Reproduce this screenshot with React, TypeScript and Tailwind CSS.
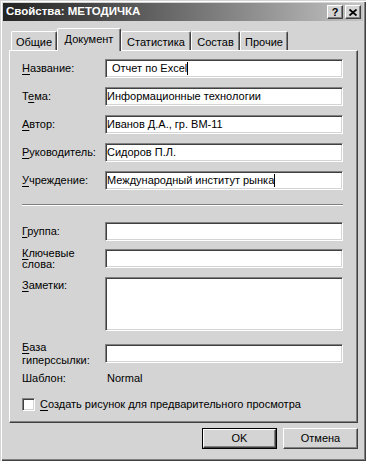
const sunken =
  "border border-t-[#808080] border-l-[#808080] border-b-white border-r-white shadow-[inset_1px_1px_0_#404040,inset_-1px_-1px_0_#d4d4d4] bg-white";
const raised =
  "border border-t-white border-l-white border-b-[#404040] border-r-[#404040] shadow-[inset_-1px_-1px_0_#808080] bg-[#d4d4d4]";

const Acc = ({ text, k }: { text: string; k: number }) => (
  <>
    {text.slice(0, k)}
    <span className="underline underline-offset-[2px]">{text[k]}</span>
    {text.slice(k + 1)}
  </>
);

const Field = ({
  label,
  k,
  value,
  className = "",
  cursor = false,
  lead = false,
}: {
  label: string;
  k: number;
  value?: string;
  className?: string;
  cursor?: boolean;
  lead?: boolean;
}) => (
  <div className={"flex items-center h-[19px] " + className}>
    <div className="w-[83px] leading-[13px]">
      <Acc text={label} k={k} />
    </div>
    <div className={sunken + " flex-1 h-[19px] flex items-center leading-[13px] " + (lead ? "pl-[6px]" : "pl-[1px]")}>
      {value}
      {cursor && <span className="inline-block w-px h-[13px] bg-black" />}
    </div>
  </div>
);

const tabs = [
  { name: "Общие", w: "w-[46px]" },
  { name: "Документ", w: "w-[64px]", active: true },
  { name: "Статистика", w: "w-[70px]" },
  { name: "Состав", w: "w-[49px]" },
  { name: "Прочие", w: "w-[48px]" },
];

export default function App() {
  return (
    <div className="w-[366px] h-[461px] bg-[#d4d4d4] p-[3px] flex flex-col text-[11px] text-black font-['Liberation_Sans',Arial,sans-serif] shadow-[inset_1px_1px_0_#d4d4d4,inset_2px_2px_0_#ffffff,inset_-1px_-1px_0_#404040,inset_-2px_-2px_0_#808080]">
      {/* title bar */}
      <div className="h-[18px] flex items-center bg-linear-to-r from-[#242424] to-[#c4c4c4] pl-[3px] pr-[2px]">
        <span className="font-bold text-white text-[11.5px] leading-none">Свойства: МЕТОДИЧКА</span>
        <div className="ml-auto flex gap-[2px]">
          <div className={raised + " w-[16px] h-[14px] flex items-center justify-center font-bold text-[11px] leading-none"}>
            ?
          </div>
          <div className={raised + " w-[16px] h-[14px] flex items-center justify-center"}>
            <svg width="8" height="7" viewBox="0 0 8 7">
              <path d="M0.5 0.5L7.5 6.5M7.5 0.5L0.5 6.5" stroke="black" strokeWidth="1.8" />
            </svg>
          </div>
        </div>
      </div>

      {/* tabs + panel */}
      <div className="ml-[6px] mr-[5px] mt-[7px] flex flex-col">
        <div className="flex items-end h-[22px] pl-[2px]">
          {tabs.map((t) =>
            t.active ? (
              <div
                key={t.name}
                className={
                  t.w +
                  " relative z-10 -mb-px h-[23px] bg-[#d4d4d4] flex items-center justify-center pb-[2px] rounded-t-[2px] border-t border-l border-white border-r border-r-[#404040] shadow-[inset_-1px_0_0_#808080]"
                }
              >
                {t.name}
              </div>
            ) : (
              <div
                key={t.name}
                className={
                  t.w +
                  " h-[19px] flex items-center justify-center pt-[2px] rounded-t-[2px] border-t border-l border-white border-r border-r-[#404040] shadow-[inset_-1px_0_0_#808080]"
                }
              >
                {t.name}
              </div>
            )
          )}
        </div>

        <div className="h-[373px] flex flex-col pl-[12px] pr-[14px] pt-[8px] border-t border-l border-white border-r border-b border-r-[#404040] border-b-[#404040] shadow-[inset_-1px_-1px_0_#808080]">
          <Field label="Название:" k={0} value="Отчет по Excel" lead cursor />
          <Field label="Тема:" k={1} value="Информационные технологии" className="mt-[9px]" />
          <Field label="Автор:" k={0} value="Иванов Д.А., гр. ВМ-11" className="mt-[9px]" />
          <Field label="Руководитель:" k={0} value="Сидоров П.Л." className="mt-[9px]" />
          <Field label="Учреждение:" k={0} value="Международный институт рынка" cursor className="mt-[9px]" />

          <div className="mt-[14px] border-t border-t-[#808080] border-b border-b-white" />

          <Field label="Группа:" k={0} className="mt-[16px]" />
          <div className="flex items-center h-[19px] mt-[8px]">
            <div className="w-[83px] leading-[11px]">
              <Acc text="Ключевые" k={0} />
              <br />
              слова:
            </div>
            <div className={sunken + " flex-1 h-[19px]"} />
          </div>
          <div className="flex items-start mt-[9px]">
            <div className="w-[83px] leading-[13px] pt-[2px]">
              <Acc text="Заметки:" k={0} />
            </div>
            <div className={sunken + " flex-1 h-[54px]"} />
          </div>
          <div className="flex items-center h-[19px] mt-[13px]">
            <div className="w-[83px] leading-[13px]">
              <Acc text="База" k={0} />
              <br />
              гиперссылки:
            </div>
            <div className={sunken + " flex-1 h-[19px]"} />
          </div>
          <div className="flex items-center mt-[9px] leading-[13px]">
            <div className="w-[83px]">Шаблон:</div>
            <div className="pl-[2px]">Normal</div>
          </div>
          <div className="flex items-center mt-[13px] gap-[5px] leading-[13px]">
            <div className={sunken + " w-[13px] h-[13px]"} />
            <div>
              <Acc text="Создать рисунок для предварительного просмотра" k={0} />
            </div>
          </div>
        </div>
      </div>

      {/* buttons */}
      <div className="mt-[5px] mr-[5px] flex justify-end gap-[6px]">
        <div className="w-[75px] h-[21px] border border-black flex">
          <div className={raised + " flex-1 flex items-center justify-center"}>OK</div>
        </div>
        <div className={raised + " w-[75px] h-[21px] flex items-center justify-center"}>Отмена</div>
      </div>
    </div>
  );
}
